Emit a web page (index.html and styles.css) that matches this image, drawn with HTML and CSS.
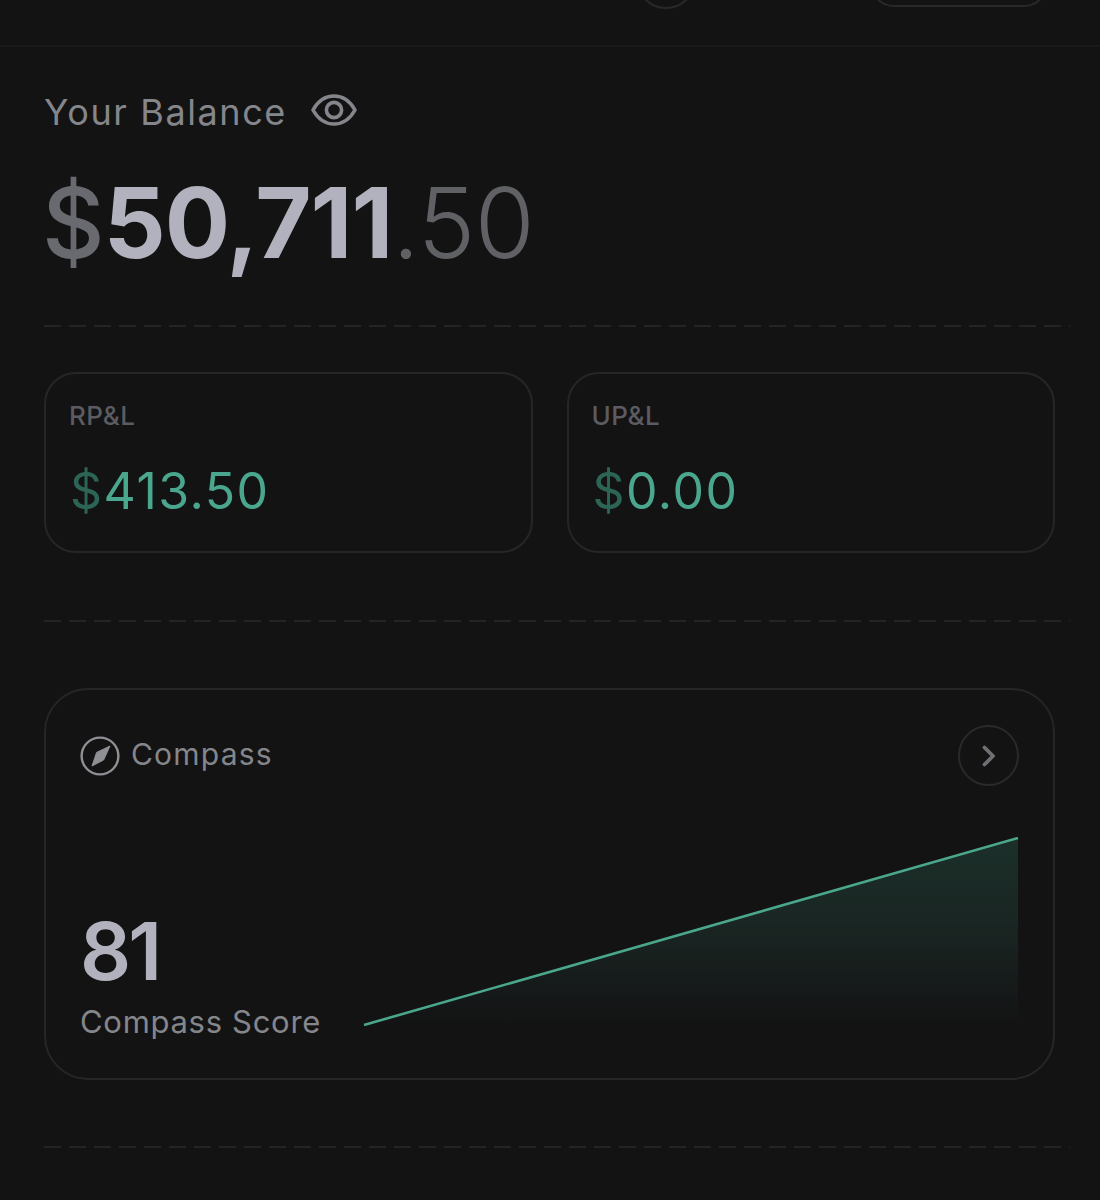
FILE: index.html
```html
<!DOCTYPE html>
<html lang="en">
<head>
<meta charset="utf-8">
<title>Balance</title>
<link rel="stylesheet" href="styles.css">
</head>
<body>
<header class="topbar">
  <div class="topbar-circle"></div>
  <div class="topbar-pill"></div>
</header>
<main class="page">
  <section class="balance">
    <div class="balance-label">
      <span>Your Balance</span>
      <svg class="eye" viewBox="0 0 46 32" fill="none" stroke="currentColor" stroke-width="3.6" stroke-linejoin="round">
        <path d="M2 16C7 7 14 2 23 2s16 5 21 14c-5 9-12 14-21 14S7 25 2 16Z"/>
        <circle cx="23" cy="16" r="7.6"/>
      </svg>
    </div>
    <div class="balance-value"><span class="cur">$</span><span class="whole">50,711</span><span class="cents">.50</span></div>
  </section>
  <div class="divider divider-first"></div>
  <section class="stats">
    <div class="stat">
      <div class="stat-label">RP&amp;L</div>
      <div class="stat-value"><span class="stat-cur">$</span>413.50</div>
    </div>
    <div class="stat">
      <div class="stat-label">UP&amp;L</div>
      <div class="stat-value"><span class="stat-cur">$</span>0.00</div>
    </div>
  </section>
  <div class="divider divider-second"></div>
  <section class="compass">
    <div class="compass-head">
      <div class="compass-title">
        <svg class="compass-icon" viewBox="0 0 40 40">
          <circle cx="20" cy="20" r="18.4" fill="none" stroke="currentColor" stroke-width="2.4"/>
          <path d="M30 10 23.6 24 12 30 16.6 16.400Z" fill="currentColor" stroke="currentColor" stroke-width="1" stroke-linejoin="round"/>
        </svg>
        <span class="compass-name">Compass</span>
      </div>
      <button class="compass-go" type="button" aria-label="Open Compass">
        <svg viewBox="0 0 14 22" fill="none" stroke="currentColor" stroke-width="3.8" stroke-linecap="round" stroke-linejoin="round"><path d="M2.500 2.500 11 11l-8.500 8.500"/></svg>
      </button>
    </div>
    <div class="compass-body">
      <div class="score">
        <div class="score-value">81</div>
        <div class="score-label">Compass Score</div>
      </div>
      <svg class="chart" viewBox="0 0 656 190" preserveAspectRatio="none">
        <defs>
          <linearGradient id="area" x1="0" y1="0" x2="0" y2="1">
            <stop offset="0" stop-color="#1b2f29"/>
            <stop offset="0.45" stop-color="#1a2623"/>
            <stop offset="1" stop-color="#131314"/>
          </linearGradient>
        </defs>
        <path d="M1 188 655 1V188Z" fill="url(#area)"/>
        <path d="M1 188 655 1" fill="none" stroke="#4aa78c" stroke-width="2.600"/>
      </svg>
    </div>
  </section>
  <div class="divider divider-third"></div>
</main>
</body>
</html>
```
FILE: styles.css
```css
* { box-sizing: border-box; }
html, body { margin: 0; background: #131314; }
body {
  width: 1100px;
  height: 1200px;
  overflow: hidden;
  font-family: Inter, "Liberation Sans", sans-serif;
}
.topbar {
  height: 47px;
  border-bottom: 2px solid #19191a;
  overflow: hidden;
  display: flex;
  justify-content: flex-end;
  align-items: flex-end;
  padding: 0 52px 36px 0;
  gap: 174px;
}
.topbar-circle {
  width: 60px;
  height: 60px;
  flex: none;
  border-radius: 50%;
  border: 2px solid #29292a;
}
.topbar-pill {
  width: 178px;
  height: 60px;
  flex: none;
  border-radius: 24px;
  border: 2px solid #29292a;
  margin-bottom: 2px;
}
.page { padding: 0 45px 0 44px; }
.balance { padding-top: 44px; }
.balance-label {
  display: flex;
  align-items: center;
  gap: 24px;
  height: 42px;
  font-size: 36px;
  letter-spacing: 1.6px;
  color: #85868b;
}
.eye { width: 46px; height: 32px; color: #85868b; margin-top: -4px; }
.balance-value {
  margin-top: 36px;
  height: 108px;
  line-height: 108px;
  font-size: 97px;
  letter-spacing: -1px;
  white-space: nowrap;
}
.cur { color: #696a6f; font-weight: 500; margin-left: -2px; letter-spacing: -1px; }
.whole { color: #b1b2bd; font-weight: 700; letter-spacing: -1px; }
.cents { color: #606165; font-weight: 300; letter-spacing: -0.5px; }
.divider {
  height: 2px;
  margin: 0 -15px 0 0;
  background: repeating-linear-gradient(90deg, #242425 0 17px, transparent 17px 25px);
}
.divider-first { margin-top: 48px; }
.stats {
  display: grid;
  grid-template-columns: 1fr 1fr;
  gap: 34px;
  margin-top: 45px;
}
.stat {
  height: 181px;
  border: 2px solid #262627;
  border-radius: 32px;
  padding: 27px 23px;
}
.stat-label {
  font-size: 26px;
  line-height: 30px;
  font-weight: 500;
  letter-spacing: 0.5px;
  color: #5b5b61;
}
.stat-value {
  margin-top: 30px;
  margin-left: 1px;
  font-size: 50px;
  line-height: 60px;
  letter-spacing: 1.5px;
  color: #4ba68e;
}
.stat-cur { color: #2c6555; }
.divider-second { margin-top: 67px; }
.compass {
  height: 392px;
  margin-top: 66px;
  border: 2px solid #262627;
  border-radius: 44px;
  padding: 35px 34px 0 34px;
  display: flex;
  flex-direction: column;
}
.compass-head {
  display: flex;
  justify-content: space-between;
  align-items: center;
}
.compass-title {
  display: flex;
  align-items: center;
  gap: 11px;
  font-size: 30px;
  letter-spacing: 1.2px;
  color: #85868b;
}
.compass-name { margin-top: -3px; }
.compass-icon { width: 40px; height: 40px; color: #8f9095; }
.compass-go {
  width: 61px;
  height: 61px;
  padding: 0;
  background: transparent;
  border: 2px solid #2a2a2b;
  border-radius: 50%;
  display: flex;
  align-items: center;
  justify-content: center;
  color: #6f6f74;
}
.compass-go svg { width: 14px; height: 22px; }
.compass-body {
  margin-top: 51px;
  display: flex;
  align-items: flex-start;
  justify-content: space-between;
}
.score { padding-top: 70px; }
.score-value {
  font-size: 80px;
  line-height: 88px;
  font-weight: 600;
  letter-spacing: -3px;
  color: #b1b2bd;
}
.score-label {
  margin-top: 8px;
  font-size: 31px;
  line-height: 38px;
  letter-spacing: 0.7px;
  color: #85868b;
}
.chart { width: 656px; height: 190px; flex: none; }
.divider-third { margin-top: 66px; }
```
